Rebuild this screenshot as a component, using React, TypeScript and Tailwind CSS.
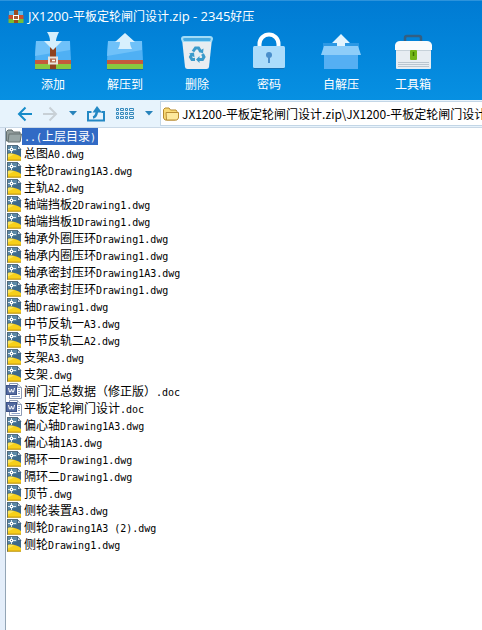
import type { ReactNode } from 'react';

type Kind = 'up' | 'dwg' | 'doc';
type Entry = { name: string; kind: Kind };

const archive = 'JX1200-平板定轮闸门设计';

const entries: Entry[] = [
  { name: '..(上层目录)', kind: 'up' },
  { name: '总图A0.dwg', kind: 'dwg' },
  { name: '主轮Drawing1A3.dwg', kind: 'dwg' },
  { name: '主轨A2.dwg', kind: 'dwg' },
  { name: '轴端挡板2Drawing1.dwg', kind: 'dwg' },
  { name: '轴端挡板1Drawing1.dwg', kind: 'dwg' },
  { name: '轴承外圈压环Drawing1.dwg', kind: 'dwg' },
  { name: '轴承内圈压环Drawing1.dwg', kind: 'dwg' },
  { name: '轴承密封压环Drawing1A3.dwg', kind: 'dwg' },
  { name: '轴承密封压环Drawing1.dwg', kind: 'dwg' },
  { name: '轴Drawing1.dwg', kind: 'dwg' },
  { name: '中节反轨一A3.dwg', kind: 'dwg' },
  { name: '中节反轨二A2.dwg', kind: 'dwg' },
  { name: '支架A3.dwg', kind: 'dwg' },
  { name: '支架.dwg', kind: 'dwg' },
  { name: '闸门汇总数据（修正版）.doc', kind: 'doc' },
  { name: '平板定轮闸门设计.doc', kind: 'doc' },
  { name: '偏心轴Drawing1A3.dwg', kind: 'dwg' },
  { name: '偏心轴1A3.dwg', kind: 'dwg' },
  { name: '隔环一Drawing1.dwg', kind: 'dwg' },
  { name: '隔环二Drawing1.dwg', kind: 'dwg' },
  { name: '顶节.dwg', kind: 'dwg' },
  { name: '侧轮装置A3.dwg', kind: 'dwg' },
  { name: '侧轮Drawing1A3 (2).dwg', kind: 'dwg' },
  { name: '侧轮Drawing1.dwg', kind: 'dwg' },
];

/** Gives the Latin runs of a mixed text a font and size of their own. */
function MixedText({ text, latin }: { text: string; latin: string }) {
  const runs = text.match(/[\x20-\x7e]+|[^\x20-\x7e]+/g) ?? [];
  return (
    <>
      {runs.map((run, i) => (
        <span key={i} className={/^[\x20-\x7e]/.test(run) ? latin : undefined}>{run}</span>
      ))}
    </>
  );
}

function FileIcon({ kind }: { kind: Kind }) {
  if (kind === 'up')
    return (
      <svg viewBox="0 0 16 16" className="size-4 shrink-0" aria-hidden="true">
        <path d="M.5 13V3.500L2 2h4l1.500 2H14v9z" fill="#939d9d" stroke="#667070" />
        <path d="M3 6h12.500L14 14H2z" fill="#98a5a5" stroke="#667070" />
      </svg>
    );
  if (kind === 'doc')
    return (
      <svg viewBox="0 0 16 16" className="size-4 shrink-0" aria-hidden="true">
        <path d="M3.500.5h8l4 4v11h-12z" fill="#fff" stroke="#8d9ab4" />
        <path d="M11.500.5v4h4" fill="#e6ebf4" stroke="#8d9ab4" />
        <path d="M12 6.500h2M12 8.500h2M12 10.500h2M5.500 13.500h8.500" stroke="#8fa3c9" />
        <rect x=".5" y="2.500" width="10" height="9" fill="#536a9f" stroke="#3c5289" />
        <path d="M2.500 5l1 4h1l1-3 1 3h1l1-4" fill="none" stroke="#fff" />
      </svg>
    );
  return (
    <svg viewBox="0 0 16 16" className="size-4 shrink-0" aria-hidden="true">
      <path d="M1 .5h11L15 3.500v12H1z" fill="#3f6a8b" />
      <path d="M1 .5h10v5L1 8z" fill="#5c88a6" />
      <path d="M1 9c5-1.500 10 0 14 3v3.500H1z" fill="#f7d01a" />
      <path d="M1 9c3-1 5-.5 7 .5L1 13z" fill="#fae35c" />
      <path d="M1 14.500h14v1H1z" fill="#cf9d12" />
      <path d="M11.500 0v4.500H16V0z" fill="#fff" />
      <path d="M11.500.5v4H15z" fill="#dce8f0" stroke="#234a6d" strokeWidth=".8" />
      <path d="M2 4.500h2M7 4.500h3M5.500 1v2M5.500 6v2" stroke="#dfeaf1" />
      <rect x="4.500" y="3.500" width="2" height="2" fill="#466f8e" stroke="#fff" />
      <path d="M1.500.5v15M1 .5h10.500" fill="none" stroke="#4a5f70" strokeWidth=".8" />
    </svg>
  );
}

function Layers() {
  return (
    <>
      <path d="M3 10h34l1 20H2z" fill="#4fb0f4" />
      <path d="M3 10h34v9L2 25z" fill="#6fc1f9" />
      <rect x="2" y="29" width="36" height="5" fill="#c45a3c" />
      <rect x="2" y="33" width="36" height="5" fill="#88c940" />
      <path d="M2 38.500h36" stroke="#176aa8" />
    </>
  );
}

function Tool({ label, children }: { label: string; children: ReactNode }) {
  return (
    <button type="button" className="flex w-[72px] shrink-0 flex-col items-center gap-[3px]">
      <svg viewBox="0 0 40 40" className="size-10" aria-hidden="true">{children}</svg>
      <span className="text-xs leading-5">{label}</span>
    </button>
  );
}

function Caret() {
  return (
    <svg viewBox="0 0 8 5" className="h-[5px] w-2" aria-hidden="true">
      <path d="M0 0h8L4 4.500z" fill="#2783bb" />
    </svg>
  );
}

export default function App() {
  return (
    <div className="flex min-h-screen flex-col overflow-hidden bg-white font-['Noto_Sans_CJK_SC',sans-serif] text-xs text-black">
      <header className="border-t border-[#2c93dc] bg-linear-to-b from-[#007bd3] to-[#0790e2] text-white">
        <div className="flex h-7 items-center gap-1 pt-1 pl-2">
          <svg viewBox="0 0 16 16" className="size-4" aria-hidden="true">
            <path d="M1 2h14v4H1z" fill="#55b9ee" />
            <rect x=".5" y="6" width="15" height="4" fill="#c9502f" />
            <rect x=".5" y="10" width="15" height="4" fill="#79bd35" />
            <rect x="6" y="1" width="4" height="13" fill="#994b22" />
            <rect x="5.500" y="6.500" width="5" height="4" fill="#a55a30" stroke="#fff" />
          </svg>
          <h1 className="whitespace-nowrap">
            <MixedText text={`${archive}.zip - 2345好压`} latin="font-['Open_Sans',sans-serif] text-[13px]" />
          </h1>
        </div>
        <nav className="flex h-[71px] pt-[2px] pl-[17px]" aria-label="工具栏">
          <Tool label="添加">
            <Layers />
            <rect x="17" y="16" width="6" height="22" fill="#8f421f" />
            <path d="M14 1h12c-2 4-3 7-3 9h6l-9 9-9-9h6c0-3-1-6-3-9z" fill="#d4effc" />
            <rect x="16" y="26.500" width="8" height="6" fill="#b5694a" stroke="#e9e4df" strokeWidth="2" />
            <path d="M19 29.500h3" stroke="#fff" strokeWidth="1.500" />
          </Tool>
          <Tool label="解压到">
            <Layers />
            <path d="M20 2l10 9h-5c0 3 1 5 2 7H13c1-2 2-4 2-7h-5z" fill="#d8f0fd" />
          </Tool>
          <Tool label="删除">
            <path d="M5 8h30l-3 28q-.3 2-2.500 2h-19Q8.300 38 8 36z" fill="#e8edf1" />
            <path d="M4 8q0-3 3-3h26q3 0 3 3l-1 3H5z" fill="#a2dcf7" />
            <path d="M6 8q0-1 2-1h24q2 0 2 1l-1 2H7z" fill="#46abe2" />
            <g fill="none" stroke="#3a9acb" strokeWidth="3">
              <path d="M16 20.500l2.500-3.500h3l2.500 4" />
              <path d="M25.500 23l1.500 3-1.500 2.500h-4.500" />
              <path d="M18 28.500h-3L13.500 26l2-3.500" />
            </g>
            <path d="M26.500 17.500l-.5 5-4.500-2zM22.500 25v7L19 28.500zM12 22.500l5-1 .5 5z" fill="#3a9acb" />
          </Tool>
          <Tool label="密码">
            <path d="M10.500 18v-5a9.500 9.500 0 0119 0v5" fill="none" stroke="#fff" strokeWidth="4" />
            <rect x="4" y="15" width="32" height="22" rx="1.500" fill="#acdcfb" />
            <path d="M5 37.500h30" stroke="#1672b4" />
            <circle cx="20" cy="24" r="3" fill="#4a8ecb" />
            <path d="M19 24h2v8h-2z" fill="#4a8ecb" />
          </Tool>
          <Tool label="自解压">
            <path d="M2 12h36v8H2z" fill="#2b98e4" />
            <path d="M20 3l9 9h-5v9h-8v-9h-5z" fill="#e2f4fe" />
            <path d="M3 22h34v16H3z" fill="#55aff3" />
            <path d="M3 15h34l3 9H0z" fill="#8dcdf9" />
          </Tool>
          <Tool label="工具箱">
            <path d="M12 11V7q0-2 2-2h12q2 0 2 2v4" fill="none" stroke="#345f82" strokeWidth="2.500" />
            <rect x="3" y="17" width="35" height="21" rx="1" fill="#e7edf2" />
            <path d="M2 19v-5q1-4 5-4h27q4 0 5 4v5z" fill="#f9fbfc" />
            <path d="M3 19.500h35" stroke="#c6d1d9" />
            <rect x="17" y="19" width="7" height="10" rx="1" fill="#72b61a" />
            <path d="M20.500 21v4" stroke="#3d7400" strokeWidth="1.500" />
            <path d="M5 31.500h31M5 33.500h31M5 35.500h31" stroke="#b9c5cf" />
          </Tool>
        </nav>
      </header>

      <div className="flex h-7 items-stretch border-b border-[#c9d8e6] bg-[#e7f3fc]">
        <div className="flex w-40 shrink-0 items-center pl-[17px]">
          <button type="button" aria-label="后退">
            <svg viewBox="0 0 16 16" className="size-4" fill="none" stroke="#168bc9" strokeWidth="2" aria-hidden="true"><path d="M15 8H2M8.500 1.500L2 8l6.500 6.500" /></svg>
          </button>
          <button type="button" aria-label="前进" className="ml-[9px]">
            <svg viewBox="0 0 16 16" className="size-4" fill="none" stroke="#c8d0d6" strokeWidth="2" aria-hidden="true"><path d="M1 8h13M7.500 1.500L14 8l-6.500 6.500" /></svg>
          </button>
          <button type="button" aria-label="历史" className="ml-[11px]"><Caret /></button>
          <button type="button" aria-label="上一级" className="ml-[9px]">
            <svg viewBox="0 0 20 16" className="h-4 w-5" fill="none" stroke="#2388c4" strokeWidth="2" aria-hidden="true">
              <path d="M5.500 6H2v8.500h16V6h-2.500" />
              <path d="M7 11.500q3-.5 4-6" strokeWidth="2.500" />
              <path d="M11 0l5 6.500H6.500z" fill="#2388c4" stroke="none" />
            </svg>
          </button>
          <button type="button" aria-label="查看" className="ml-[10px]">
            <svg viewBox="0 0 19 12" className="h-3 w-[19px]" fill="none" stroke="#3389bc" aria-hidden="true">
              {[0, 4, 8].map((y) => (
                <path key={y} d={`M.5 ${y + 0.5}h2v2h-2zM4.500 ${y + 0.5}h3v2h-3zM9.500 ${y + 0.5}h2v2h-2zM13.500 ${y + 0.5}h4v2h-4z`} />
              ))}
            </svg>
          </button>
          <button type="button" aria-label="查看方式" className="ml-[10px]"><Caret /></button>
        </div>
        <label className="my-px flex min-w-0 flex-1 items-center gap-[3px] border-y border-l border-[#c3d6e6] bg-white pl-[2px]">
          <svg viewBox="0 0 16 16" className="size-4 shrink-0" aria-hidden="true">
            <path d="M.5 12V3.500L2 2h4l1.500 2H13l1 1.500V12l-1.500 2H2z" fill="#f9da75" stroke="#b58a2e" />
            <path d="M3 6.500h12.500V12L14 14H3.500z" fill="#fde99d" stroke="#b98e35" />
          </svg>
          <input
            aria-label="路径"
            readOnly
            value={`${archive}.zip\\${archive}`}
            className="min-w-0 flex-1 bg-transparent text-xs outline-none"
          />
        </label>
      </div>

      <main className="flex flex-1">
        <div className="w-[6px] shrink-0 border-r border-[#93a5b5] bg-[#e4eefa]" />
        <ul className="flex-1">
          {entries.map((entry) => (
            <li key={entry.name} className="flex h-[17px] items-start">
              <FileIcon kind={entry.kind} />
              <span
                className={
                  entry.kind === 'up'
                    ? 'h-[17px] bg-[#316ac5] px-[2px] leading-4 whitespace-nowrap text-white'
                    : 'h-[17px] px-[2px] leading-4 whitespace-nowrap'
                }
              >
                <MixedText text={entry.name} latin="font-['DejaVu_Sans_Mono',monospace] text-[10px]" />
              </span>
            </li>
          ))}
        </ul>
      </main>
    </div>
  );
}
